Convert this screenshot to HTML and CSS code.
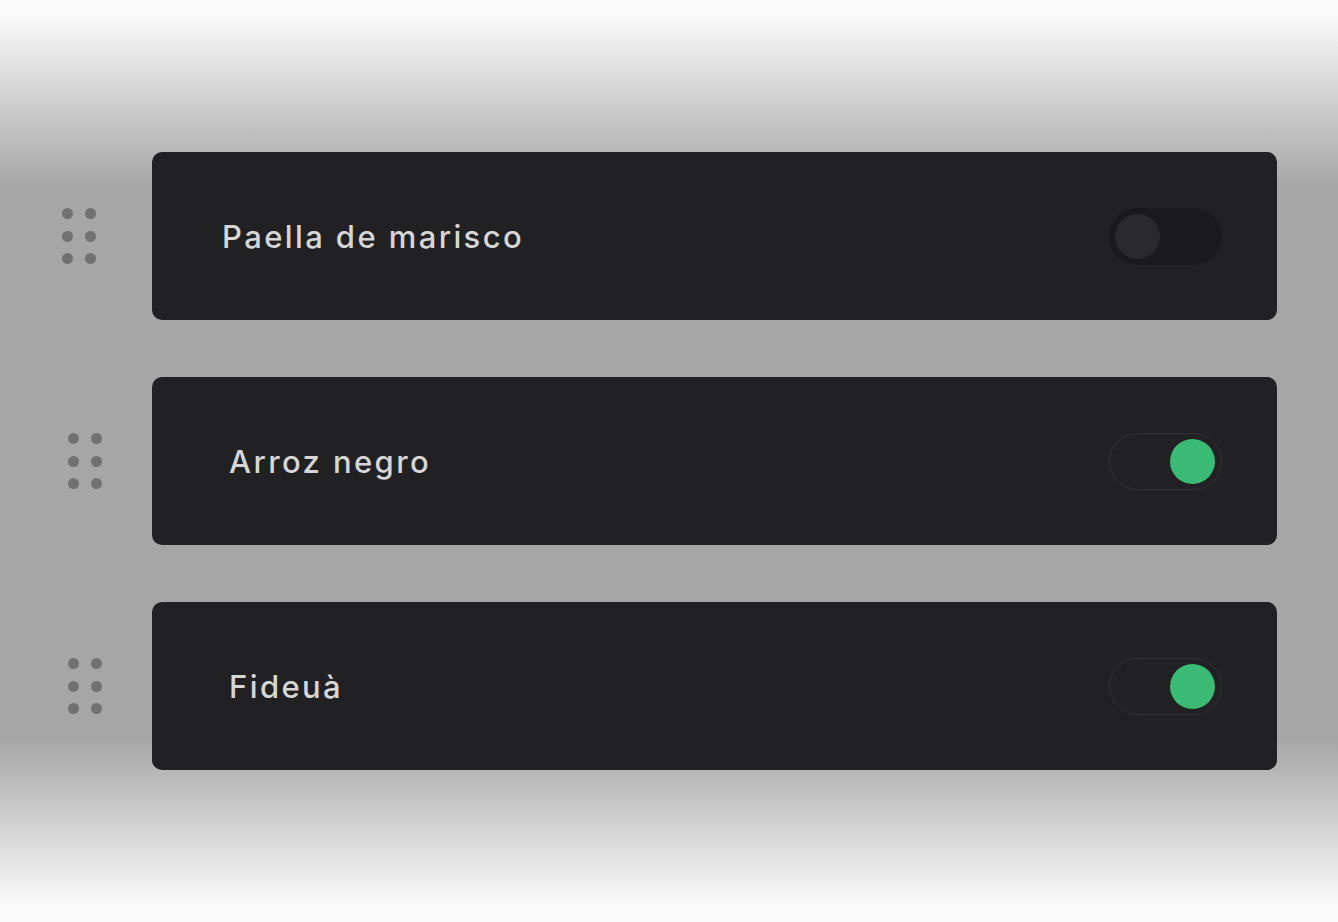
FILE: index.html
```html
<!DOCTYPE html>
<html lang="en">
<head>
    <meta charset="UTF-8">
    <meta name="viewport" content="width=device-width, initial-scale=1.0">
    <title>Platos</title>
    <link rel="stylesheet" href="styles.css">
</head>
<body>

    <div class="list">
        <div class="row">
            <div class="handle">
                <span></span><span></span>
                <span></span><span></span>
                <span></span><span></span>
            </div>
            <div class="card">
                <span class="label">Paella de marisco</span>
                <div class="toggle"><div class="knob"></div></div>
            </div>
        </div>

        <div class="row nudged">
            <div class="handle">
                <span></span><span></span>
                <span></span><span></span>
                <span></span><span></span>
            </div>
            <div class="card">
                <span class="label">Arroz negro</span>
                <div class="toggle on"><div class="knob"></div></div>
            </div>
        </div>

        <div class="row nudged">
            <div class="handle">
                <span></span><span></span>
                <span></span><span></span>
                <span></span><span></span>
            </div>
            <div class="card">
                <span class="label">Fideuà</span>
                <div class="toggle on"><div class="knob"></div></div>
            </div>
        </div>
    </div>

</body>
</html>
```

FILE: styles.css
```css
html, body {
    margin: 0;
    height: 100%;
}
body {
    font-family: Inter, "DejaVu Sans", sans-serif;
    background: linear-gradient(to bottom,
        #fafafa 0px, #fafafa 14px,
        #a6a6a6 186px, #a6a6a6 738px,
        #fafafa 906px, #fafafa 100%);
}
.list {
    display: flex;
    flex-direction: column;
    gap: 57px;
    padding: 152px 0 0 62px;
    width: 1215px;
}
.row {
    display: flex;
    align-items: center;
}
.handle {
    display: grid;
    grid-template-columns: repeat(2, 11px);
    grid-auto-rows: 11px;
    column-gap: 12px;
    row-gap: 11.5px;
    width: 34px;
    margin-right: 56px;
}
.handle span {
    width: 11px;
    height: 11px;
    border-radius: 50%;
    background-color: #717171;
}
.card {
    flex: 1;
    height: 168px;
    box-sizing: border-box;
    background-color: #212123;
    border-radius: 10px;
    display: flex;
    align-items: center;
    justify-content: space-between;
    padding: 0 55px 0 70px;
}
.label {
    color: #d6d6d6;
    font-size: 31px;
    font-weight: 500;
    letter-spacing: 2.4px;
}
.nudged .handle {
    margin-left: 6px;
    margin-right: 50px;
}
.nudged .label {
    margin-left: 7px;
}
.toggle {
    width: 113px;
    height: 57px;
    box-sizing: border-box;
    border-radius: 29px;
    background-color: #1a1a1c;
    display: flex;
    align-items: center;
    padding: 0 6px;
}
.toggle .knob {
    width: 45px;
    height: 45px;
    border-radius: 50%;
    background-color: #2a2a2c;
}
.toggle.on {
    background-color: #212123;
    border: 1px solid #333336;
    justify-content: flex-end;
}
.toggle.on .knob {
    background-color: #3bba75;
}
```
